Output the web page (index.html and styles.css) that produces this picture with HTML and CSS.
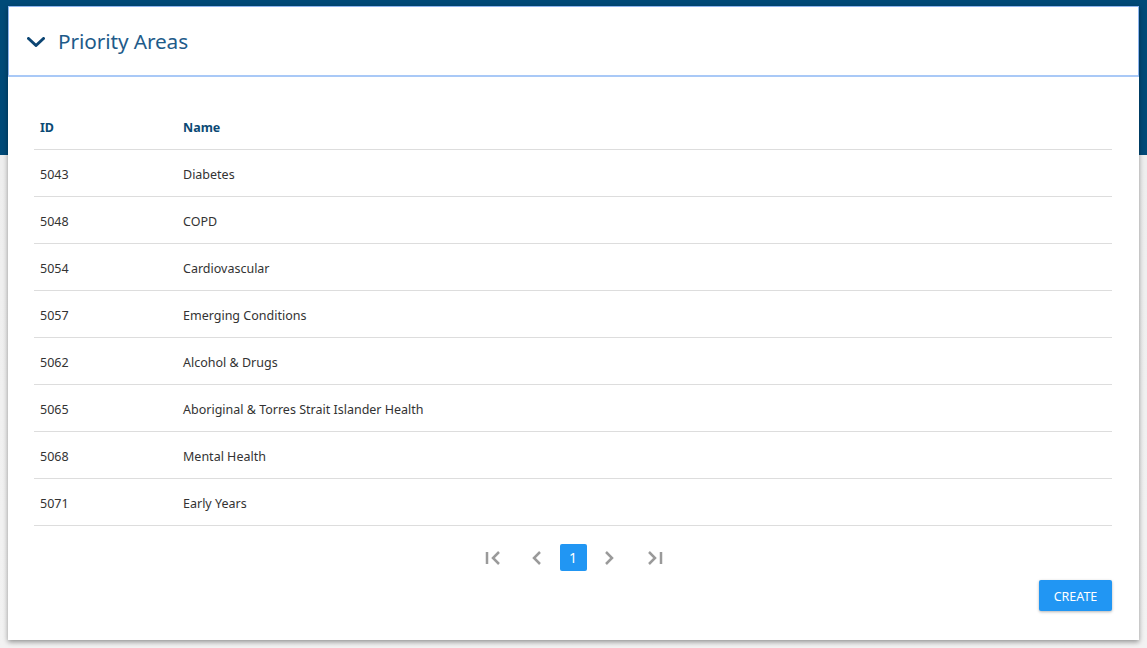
FILE: index.html
```html
<!DOCTYPE html>
<html>
<head>
<meta charset="utf-8">
<link rel="stylesheet" href="styles.css">
</head>
<body>
<div class="card">
  <div class="card-header">
    <svg class="chevron" width="18" height="10" viewBox="0 0 18 10"><path d="M1.5 1.5 L9 8.5 L16.5 1.5" fill="none" stroke="#0c4573" stroke-width="3" stroke-linecap="round" stroke-linejoin="round"/></svg>
    <span class="title">Priority Areas</span>
  </div>
  <div class="card-body">
    <table class="grid">
      <thead>
        <tr><th class="col-id">ID</th><th>Name</th></tr>
      </thead>
      <tbody>
        <tr><td>5043</td><td>Diabetes</td></tr>
        <tr><td>5048</td><td>COPD</td></tr>
        <tr><td>5054</td><td>Cardiovascular</td></tr>
        <tr><td>5057</td><td>Emerging Conditions</td></tr>
        <tr><td>5062</td><td>Alcohol &amp; Drugs</td></tr>
        <tr><td>5065</td><td>Aboriginal &amp; Torres Strait Islander Health</td></tr>
        <tr><td>5068</td><td>Mental Health</td></tr>
        <tr><td>5071</td><td>Early Years</td></tr>
      </tbody>
    </table>
    <div class="pager">
      <span class="pg-btn pg-first"><svg width="18" height="16" viewBox="0 0 18 16"><path d="M2 2 V14" stroke="#9a9a9a" stroke-width="2.5" fill="none"/><path d="M14 2 L8 8 L14 14" stroke="#9a9a9a" stroke-width="2.5" fill="none"/></svg></span>
      <span class="pg-btn"><svg width="12" height="16" viewBox="0 0 12 16"><path d="M9 2 L3 8 L9 14" stroke="#9a9a9a" stroke-width="2.5" fill="none"/></svg></span>
      <span class="pg-num">1</span>
      <span class="pg-btn"><svg width="12" height="16" viewBox="0 0 12 16"><path d="M3 2 L9 8 L3 14" stroke="#9a9a9a" stroke-width="2.5" fill="none"/></svg></span>
      <span class="pg-btn"><svg width="18" height="16" viewBox="0 0 18 16"><path d="M4 2 L10 8 L4 14" stroke="#9a9a9a" stroke-width="2.5" fill="none"/><path d="M16 2 V14" stroke="#9a9a9a" stroke-width="2.5" fill="none"/></svg></span>
    </div>
    <div class="actions">
      <button class="btn-create">CREATE</button>
    </div>
  </div>
</div>
</body>
</html>
```
FILE: styles.css
```css
html, body {
  margin: 0;
  padding: 0;
}
body {
  width: 1147px;
  height: 648px;
  overflow: hidden;
  background: linear-gradient(#004a78 0, #004a78 155px, #eeeeee 155px, #f2f2f2 100%);
  font-family: "Noto Sans", "Open Sans", sans-serif;
  padding-top: 6px;
  box-sizing: border-box;
}
.card {
  margin: 0 8px;
  background: #fff;
  box-shadow: 0 2px 5px rgba(0,0,0,0.4);
}
.card-header {
  height: 68px;
  border: 1px solid #8db5ef;
  border-bottom: 2px solid #a9c9f7;
  display: flex;
  align-items: center;
  padding-left: 18px;
  box-sizing: content-box;
}
.chevron {
  margin-top: 2px;
  margin-right: 13px;
}
.title {
  font-size: 20.8px;
  color: #1e5b8a;
  letter-spacing: -0.1px;
}
.card-body {
  padding: 26px 27px 29px 26px;
}
.grid {
  width: 100%;
  border-collapse: collapse;
  font-size: 12.5px;
  color: #333;
}
.grid th, .grid td {
  height: 44px;
  padding: 2px 6px 0 6px;
  text-align: left;
  border-bottom: 1px solid #dddddd;
}
.grid th {
  font-weight: bold;
  color: #0b4a75;
}
.col-id {
  width: 131px;
}
.pager {
  margin-top: 18px;
  display: flex;
  justify-content: center;
  align-items: center;
  height: 27px;
}
.pg-btn {
  display: flex;
  align-items: center;
  justify-content: center;
  width: 45px;
  height: 27px;
  box-sizing: border-box;
}
.pg-first {
  padding-left: 4px;
}
.pg-num {
  width: 27px;
  height: 27px;
  background: #2196f3;
  color: #fff;
  border-radius: 2px;
  display: flex;
  align-items: center;
  justify-content: center;
  font-size: 14px;
}
.actions {
  margin-top: 9px;
  display: flex;
  justify-content: flex-end;
}
.btn-create {
  background: #2196f3;
  color: #fff;
  border: none;
  border-radius: 2px;
  height: 31px;
  width: 73px;
  font-family: "Noto Sans", "Open Sans", sans-serif;
  font-size: 12.5px;
  box-shadow: 0 1px 3px rgba(0,0,0,0.3);
  padding: 1px 0 0 0;
}
```
